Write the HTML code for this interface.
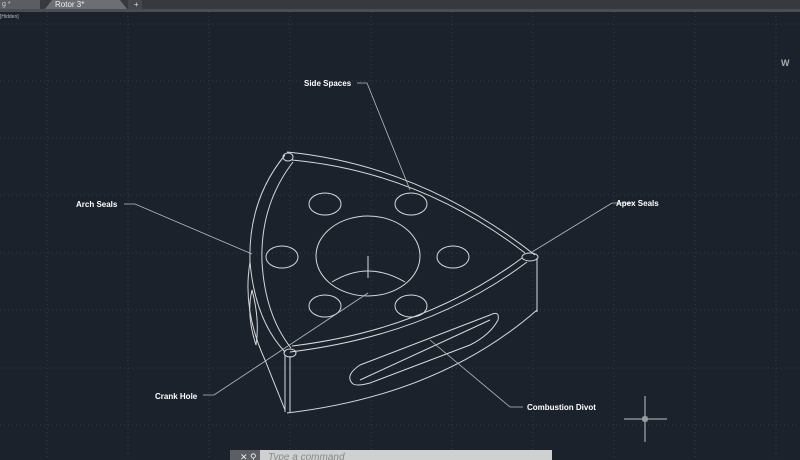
<!DOCTYPE html>
<html><head><style>
html,body{margin:0;padding:0;width:800px;height:460px;overflow:hidden;background:#1b222c;font-family:"Liberation Sans",sans-serif}
svg{position:absolute;left:0;top:0}
</style></head><body>
<svg width="800" height="460" viewBox="0 0 800 460">
<rect width="800" height="460" fill="#1b222c"/>
<g stroke="#333b47" stroke-width="1" stroke-dasharray="1 3">
<line x1="47" y1="12" x2="47" y2="460"/><line x1="128" y1="12" x2="128" y2="460"/><line x1="209" y1="12" x2="209" y2="460"/><line x1="290" y1="12" x2="290" y2="460"/><line x1="371" y1="12" x2="371" y2="460"/><line x1="452" y1="12" x2="452" y2="460"/><line x1="533" y1="12" x2="533" y2="460"/><line x1="614" y1="12" x2="614" y2="460"/><line x1="695" y1="12" x2="695" y2="460"/><line x1="776" y1="12" x2="776" y2="460"/>
<line x1="0" y1="24" x2="800" y2="24"/><line x1="0" y1="81" x2="800" y2="81"/><line x1="0" y1="138" x2="800" y2="138"/><line x1="0" y1="195" x2="800" y2="195"/><line x1="0" y1="253" x2="800" y2="253"/><line x1="0" y1="310" x2="800" y2="310"/><line x1="0" y1="368" x2="800" y2="368"/><line x1="0" y1="425" x2="800" y2="425"/>
</g>
<rect x="0" y="0" width="800" height="9" fill="#36393e"/>
<rect x="0" y="0" width="40" height="9" fill="#5a5d62"/>
<path d="M45 9 L52 0 H120 L127 9Z" fill="#6b6e73"/>
<rect x="128" y="0" width="14" height="9" fill="#44474c"/>
<text x="134" y="7" fill="#ddd" font-size="8">+</text>
<text x="2" y="6" fill="#ccc" font-size="7">g *</text>
<text x="55" y="7" fill="#eee" font-size="8">Rotor 3*</text>
<rect x="0" y="9" width="800" height="3" fill="#4a4d52"/>
<text x="0" y="18" fill="#bbb" font-size="5">[Hidden]</text>
<text x="781" y="66" fill="#aaa" font-size="9" font-weight="bold">W</text>
<g fill="none" stroke="#d6d9dc" stroke-width="1">
<path d="M287 152 Q420 165 535 255"/>
<path d="M292 160 Q420 172 525 253"/>
<path d="M285 155 Q248 200 250 262 Q255 320 285 352"/>
<path d="M293 162 Q260 205 262 262 Q265 315 291 348"/>
<path d="M290 352 Q430 335 527 262"/>
<path d="M292 346 Q425 330 522 258"/>
<path d="M285 355 V412"/><path d="M290 356 V412"/>
<path d="M287 413 Q440 395 537 310"/>
<path d="M537 258 V312"/>
<path d="M250 262 Q242 310 265 360 L285 410"/>
<path d="M252 290 Q246 315 256 345 Q260 320 252 290Z"/>
<ellipse cx="530" cy="257" rx="8" ry="4"/>
<ellipse cx="290" cy="353" rx="6" ry="4"/>
<ellipse cx="288" cy="157" rx="5" ry="4"/>
<path d="M352 383 Q345 375 360 365 L490 315 Q500 310 498 320 Q490 335 470 345 L370 383 Q355 387 352 383Z"/>
<path d="M360 380 L490 320"/>
<ellipse cx="325" cy="204" rx="16" ry="11"/>
<ellipse cx="411" cy="204" rx="16" ry="11"/>
<ellipse cx="282" cy="257" rx="16" ry="11"/>
<ellipse cx="453" cy="257" rx="16" ry="11"/>
<ellipse cx="325" cy="306" rx="16" ry="11"/>
<ellipse cx="411" cy="306" rx="16" ry="11"/>
<ellipse cx="368" cy="256" rx="52" ry="40"/>
<path d="M332 282 Q368 260 405 282"/>
<line x1="368" y1="256" x2="368" y2="278"/>
</g>
<g fill="none" stroke="#b8bcc0" stroke-width="0.8">
<path d="M357 83 H367 L410 190"/>
<path d="M124 204 H135 L252 254"/>
<path d="M635 203 H612 L532 252"/>
<path d="M203 395 H214 L368 293"/>
<path d="M523 407 H510 L430 340"/>
</g>
<g fill="#fff" font-size="8" font-weight="bold">
<text x="304" y="86">Side Spaces</text>
<text x="76" y="207">Arch Seals</text>
<text x="616" y="206">Apex Seals</text>
<text x="155" y="399">Crank Hole</text>
<text x="527" y="410">Combustion Divot</text>
</g>
<g stroke="#c0c4c8" stroke-width="1">
<line x1="645" y1="396" x2="645" y2="442"/><line x1="624" y1="419" x2="667" y2="419"/>
</g>
<rect x="643" y="417" width="4" height="4" fill="none" stroke="#c0c4c8"/>
<rect x="230" y="450" width="32" height="10" fill="#5b5e63"/>
<rect x="260" y="450" width="292" height="10" fill="#cfd0d2"/>
<text x="240" y="460" fill="#eee" font-size="9">✕ ⚲</text>
<text x="268" y="460" fill="#888" font-size="10" font-style="italic">Type a command</text>
</svg>
</body></html>
